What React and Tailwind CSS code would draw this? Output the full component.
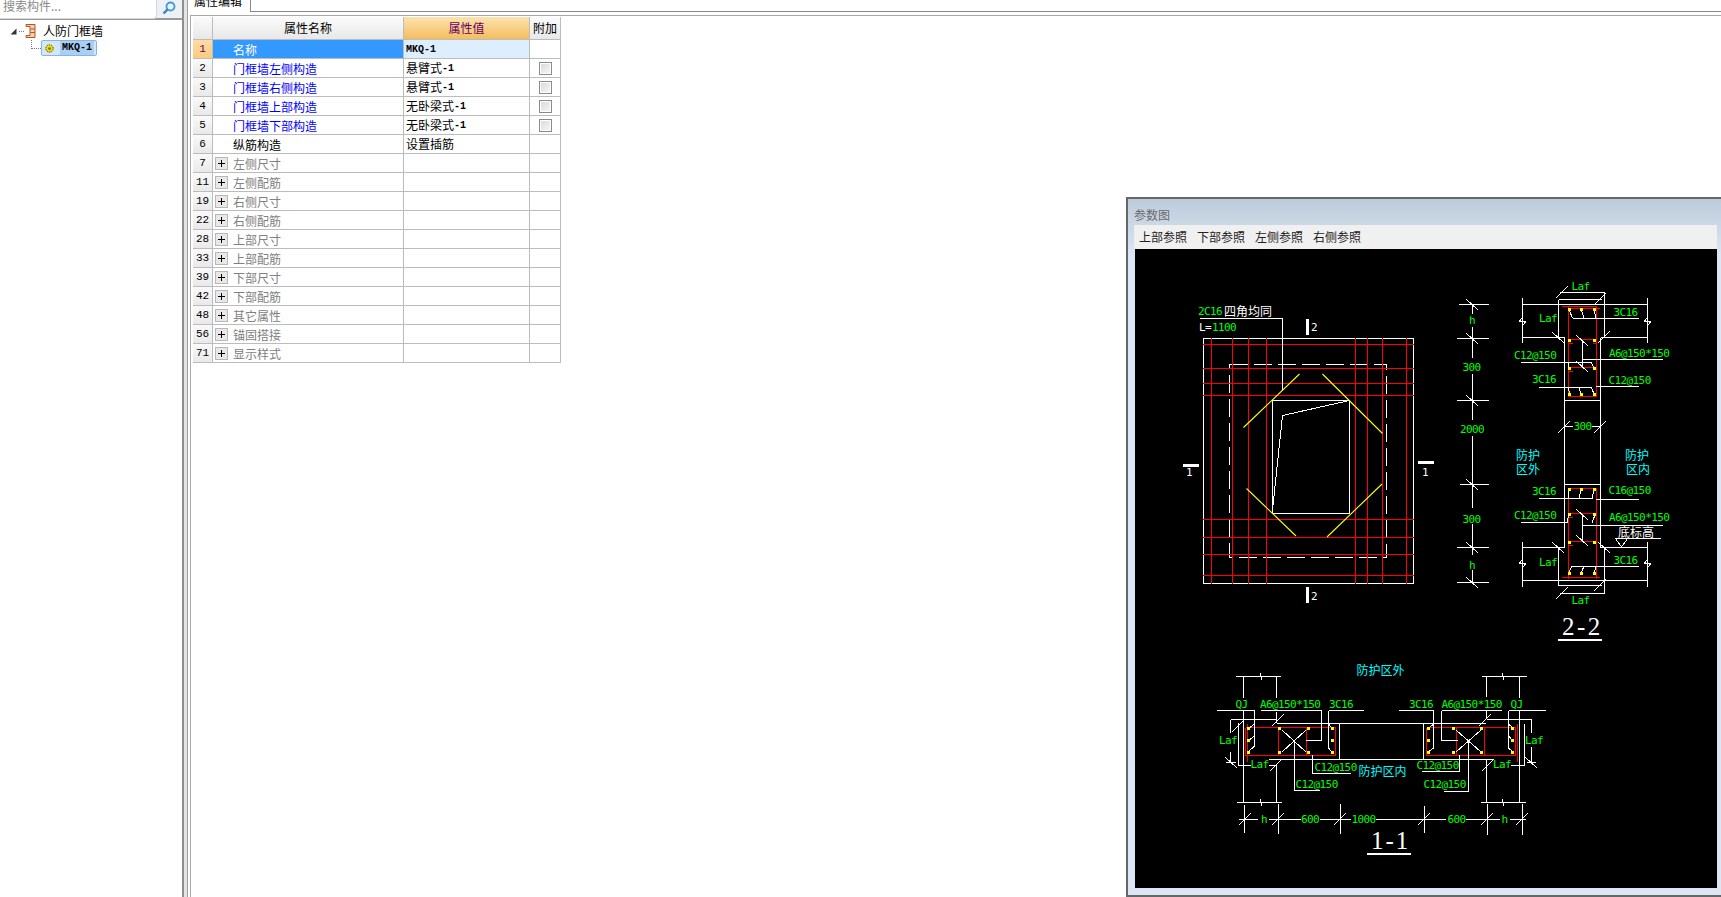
import React from 'react';

const rows = [
  { n: '1', name: '名称', value: <span className="font-['Liberation_Mono'] text-[10px] font-bold">MKQ-1</span>, active: true },
  { n: '2', name: '门框墙左侧构造', cn: '悬臂式', check: true, link: true },
  { n: '3', name: '门框墙右侧构造', cn: '悬臂式', check: true, link: true },
  { n: '4', name: '门框墙上部构造', cn: '无卧梁式', check: true, link: true },
  { n: '5', name: '门框墙下部构造', cn: '无卧梁式', check: true, link: true },
  { n: '6', name: '纵筋构造', value: '设置插筋' },
  { n: '7', name: '左侧尺寸', group: true },
  { n: '11', name: '左侧配筋', group: true },
  { n: '19', name: '右侧尺寸', group: true },
  { n: '22', name: '右侧配筋', group: true },
  { n: '28', name: '上部尺寸', group: true },
  { n: '33', name: '上部配筋', group: true },
  { n: '39', name: '下部尺寸', group: true },
  { n: '42', name: '下部配筋', group: true },
  { n: '48', name: '其它属性', group: true },
  { n: '56', name: '锚固搭接', group: true },
  { n: '71', name: '显示样式', group: true },
];

const back = (x, y) => [x - 6, y - 5, x + 6, y + 6];
const fwd = (x, y) => [x - 6, y + 6, x + 6, y - 6];

// drawing coordinates are page pixels, see the viewBox on the svg
const white = [
  // plan
  [1200, 318.5, 1282.5, 318.5], [1282.5, 318.5, 1282.5, 390],
  [1349.5, 400.5, 1282.5, 415.5], [1282.5, 415.5, 1272.5, 510],
  // 2-2 dimension column
  [1472.5, 304, 1472.5, 314], [1472.5, 327, 1472.5, 358], [1472.5, 374, 1472.5, 420], [1472.5, 436, 1472.5, 508],
  [1472.5, 524, 1472.5, 555], [1472.5, 570, 1472.5, 582],
  [1459, 304.5, 1489, 304.5], [1457, 338.5, 1489, 338.5], [1457, 400.5, 1489, 400.5],
  [1460, 484.5, 1489, 484.5], [1457, 547.5, 1489, 547.5], [1457, 582.5, 1489, 582.5],
  back(1472, 304), back(1472, 338), back(1472, 400), back(1472, 484), back(1472, 547), back(1472, 582),
  // 2-2 walls
  [1522.5, 304.5, 1647.5, 304.5], [1522.5, 298, 1522.5, 343], [1647.5, 298, 1647.5, 343],
  [1522.5, 337.5, 1564.5, 337.5], [1600.5, 337.5, 1647.5, 337.5],
  [1564.5, 337.5, 1564.5, 547.5], [1600.5, 337.5, 1600.5, 547.5],
  [1564.5, 400.5, 1600.5, 400.5], [1564.5, 484.5, 1600.5, 484.5],
  [1522.5, 547.5, 1564.5, 547.5], [1600.5, 547.5, 1647.5, 547.5],
  [1522.5, 580.5, 1647.5, 580.5], [1522.5, 542, 1522.5, 587], [1647.5, 542, 1647.5, 587],
  // break marks
  [1519, 321.5, 1526, 321.5], [1644, 321.5, 1651, 321.5], [1519, 563.5, 1526, 563.5], [1644, 563.5, 1651, 563.5],
  [1519, 321.5, 1523, 317], [1526, 321.5, 1522, 326], [1644, 321.5, 1648, 317], [1651, 321.5, 1647, 326],
  [1519, 563.5, 1523, 559], [1526, 563.5, 1522, 568], [1644, 563.5, 1648, 559], [1651, 563.5, 1647, 568],
  [1558.5, 299.5, 1558.5, 337.5], [1604.5, 292.5, 1604.5, 337.5],
  [1558.5, 299.5, 1601.5, 299.5], [1560, 292.5, 1604.5, 292.5],
  fwd(1562, 292), fwd(1600, 299), back(1558, 337), fwd(1604, 337),
  [1558.5, 547.5, 1558.5, 585.5], [1604.5, 547.5, 1604.5, 593.5],
  [1558.5, 585.5, 1601.5, 585.5], [1560, 593.5, 1604.5, 593.5],
  fwd(1562, 593), fwd(1600, 585), back(1558, 547), back(1604, 547),
  [1565, 426.5, 1573, 426.5], [1592, 426.5, 1600, 426.5], fwd(1564, 427), fwd(1600, 427),
  // 2-2 top stirrups
  [1572.5, 318.5, 1639, 318.5], [1569, 309, 1572.5, 318.5], [1581, 309, 1584, 318.5], [1594, 309, 1596, 318.5],
  back(1582, 340), [1582.5, 340, 1582.5, 367], [1582.5, 359.5, 1662.5, 359.5], [1521, 362.5, 1591.5, 362.5],
  [1568, 363, 1569, 368], [1591.5, 363, 1594, 368], back(1582, 366),
  [1539, 387.5, 1591.5, 387.5], [1568, 387.5, 1570, 394], [1579, 387.5, 1581, 394], [1591.5, 387.5, 1594, 394],
  [1596, 386.5, 1639, 386.5],
  // 2-2 bottom stirrups
  [1539, 498.5, 1593, 498.5], [1569, 489, 1568, 498.5], [1581, 489, 1579, 498.5], [1594, 489, 1592, 498.5],
  [1596, 499.5, 1639, 499.5], [1521, 522.5, 1568, 522.5], [1569, 514, 1567, 522.5], [1595, 515, 1592, 522.5],
  back(1582, 514), [1582.5, 515, 1582.5, 540], [1582.5, 525.5, 1662.5, 525.5], back(1582, 540),
  [1615, 538.5, 1661, 538.5], [1616, 539.5, 1621.5, 547], [1621.5, 547, 1627, 539.5],
  [1571.5, 566.5, 1639, 566.5], [1569, 573, 1571.5, 566.5], [1581, 573, 1584, 566.5], [1594, 573, 1596, 566.5],
  // 1-1 left half
  [1236, 676.5, 1281, 676.5], [1243.5, 676.5, 1243.5, 698], [1276.5, 676.5, 1276.5, 698],
  [1217, 710.5, 1254.5, 710.5], [1261, 710.5, 1321.5, 710.5], [1328.5, 710.5, 1364, 710.5],
  [1254.5, 710.5, 1254.5, 746], [1254.5, 724, 1248, 729], [1254.5, 736, 1248, 741], [1254.5, 746, 1248, 752],
  [1321.5, 710.5, 1321.5, 740.5], [1306, 740.5, 1321.5, 740.5],
  [1328.5, 710.5, 1328.5, 748], [1328.5, 748, 1332, 752], [1328.5, 724, 1332, 728],
  [1276.5, 712, 1276.5, 723], fwd(1278, 720),
  [1276.5, 723.5, 1423.5, 723.5], [1339.5, 723.5, 1339.5, 759.5], [1423.5, 723.5, 1423.5, 759.5],
  [1269, 759.5, 1493, 759.5],
  [1230.5, 719.5, 1276.5, 719.5], [1230.5, 719.5, 1230.5, 733],
  [1238.5, 723, 1238.5, 765.5], [1238.5, 765.5, 1250.5, 765.5], [1269, 765.5, 1277, 765.5], fwd(1276, 765),
  [1230.5, 752, 1230.5, 762.5], [1226, 762.5, 1236, 762.5], back(1231, 762), fwd(1238, 726),
  [1243.5, 710.5, 1243.5, 802.5], [1276.5, 765, 1276.5, 802.5], [1237, 802.5, 1281.5, 802.5],
  [1282, 730, 1306, 752], [1306, 730, 1282, 752],
  [1294.5, 741, 1294.5, 790.5], [1294.5, 790.5, 1320, 790.5],
  [1312.5, 755, 1312.5, 773.5], [1312.5, 773.5, 1350.5, 773.5],
  // 1-1 right half
  [1482, 676.5, 1526.5, 676.5], [1486.5, 676.5, 1486.5, 697], [1519.5, 676.5, 1519.5, 698],
  [1399, 710.5, 1434, 710.5], [1441.5, 710.5, 1501.5, 710.5], [1508.5, 710.5, 1545.5, 710.5],
  [1433.5, 710.5, 1433.5, 748], [1433.5, 748, 1428, 752], [1433.5, 724, 1428, 729],
  [1441.5, 710.5, 1441.5, 740.5], [1441.5, 740.5, 1457.5, 740.5],
  [1508.5, 710.5, 1508.5, 748], [1508.5, 748, 1513, 752], [1508.5, 724, 1513, 728], [1508.5, 736, 1513, 741],
  [1486.5, 710, 1486.5, 719], [1486.5, 759, 1486.5, 802.5], [1519.5, 710, 1519.5, 802.5],
  [1487, 719.5, 1531.5, 719.5], [1531.5, 719.5, 1531.5, 733], fwd(1485, 720),
  [1423, 723.5, 1486, 723.5],
  [1456, 730, 1481, 752], [1481, 730, 1456, 752],
  [1468.5, 741, 1468.5, 791.5], [1443.5, 791.5, 1468.5, 791.5],
  [1459.5, 755, 1459.5, 771.5], [1421.5, 771.5, 1459.5, 771.5],
  [1511, 765.5, 1524.5, 765.5], [1524.5, 724, 1524.5, 765.5], fwd(1488, 765),
  [1531.5, 747, 1531.5, 762.5], [1527, 762.5, 1536, 762.5], back(1531, 762),
  [1481, 802.5, 1526, 802.5],
  // 1-1 bottom dimension
  [1239, 819.5, 1258, 819.5], [1269, 819.5, 1301, 819.5], [1320, 819.5, 1351, 819.5], [1376, 819.5, 1446, 819.5],
  [1466, 819.5, 1500, 819.5], [1510, 819.5, 1526, 819.5],
  [1244.5, 805, 1244.5, 832.5], [1278.5, 804, 1278.5, 834], [1340.5, 804, 1340.5, 834],
  [1424.5, 806, 1424.5, 832.5], [1487.5, 804, 1487.5, 835], [1522.5, 804, 1522.5, 835],
  fwd(1245, 819), fwd(1278, 819), fwd(1340, 819), fwd(1424, 819), fwd(1487, 819), fwd(1522, 819),
  // little arrows on the 1-1 top and bottom dimensions
  [1260, 673, 1262, 680], [1260, 799, 1262, 806], [1502, 673, 1504, 680], [1502, 799, 1504, 806],
];

const red = [
  [1211.5, 338, 1211.5, 584], [1232.5, 338, 1232.5, 584], [1248.5, 338, 1248.5, 584], [1266.5, 338, 1266.5, 584],
  [1355.5, 338, 1355.5, 584], [1367.5, 338, 1367.5, 584], [1382.5, 338, 1382.5, 584], [1406.5, 338, 1406.5, 584],
  [1203, 344.5, 1414, 344.5], [1203, 368.5, 1414, 368.5], [1203, 383.5, 1414, 383.5], [1203, 395.5, 1414, 395.5],
  [1203, 519.5, 1414, 519.5], [1203, 537.5, 1414, 537.5], [1203, 554.5, 1414, 554.5], [1203, 575.5, 1414, 575.5],
  // 2-2
  [1568.5, 306.5, 1568.5, 396.5], [1596.5, 306.5, 1596.5, 396.5], [1568.5, 396.5, 1596.5, 396.5],
  [1562, 306.5, 1597, 306.5], [1568.5, 308.5, 1600, 308.5], [1568.5, 339.5, 1596.5, 339.5], [1568.5, 367.5, 1596.5, 367.5],
  [1569, 343.5, 1573, 343.5], [1569, 371.5, 1573, 371.5], [1593, 343.5, 1597, 343.5],
  [1568.5, 488.5, 1568.5, 578.5], [1596.5, 488.5, 1596.5, 578.5], [1568.5, 488.5, 1596.5, 488.5],
  [1562, 577.5, 1600, 577.5], [1568.5, 513.5, 1596.5, 513.5], [1568.5, 541.5, 1596.5, 541.5],
  [1569, 517.5, 1573, 517.5], [1569, 545.5, 1573, 545.5],
  // 1-1
  [1245.5, 727.5, 1335.5, 727.5], [1245.5, 755.5, 1335.5, 755.5], [1245.5, 727.5, 1245.5, 755.5], [1335.5, 727.5, 1335.5, 755.5],
  [1247.5, 724, 1247.5, 761.5], [1278.5, 727.5, 1278.5, 755.5], [1306.5, 727.5, 1306.5, 755.5],
  [1426.5, 727.5, 1515.5, 727.5], [1426.5, 755.5, 1515.5, 755.5], [1426.5, 727.5, 1426.5, 755.5], [1515.5, 727.5, 1515.5, 755.5],
  [1517.5, 724, 1517.5, 761.5], [1456.5, 727.5, 1456.5, 755.5], [1484.5, 727.5, 1484.5, 755.5],
];

const yellow = [
  [1299.5, 374, 1243.5, 427.5], [1322.5, 374, 1382.5, 433.5], [1246.5, 488.5, 1296, 536], [1327, 537, 1382, 484],
];

const dots = [
  [1569, 309], [1581, 309], [1594, 309], [1569, 340], [1594, 340], [1569, 368], [1594, 368], [1569, 394], [1581, 394], [1594, 394],
  [1569, 489], [1581, 489], [1594, 489], [1569, 514], [1594, 514], [1569, 542], [1594, 542], [1569, 573], [1581, 573], [1594, 573],
  [1248, 728], [1248, 740], [1248, 752], [1279, 728], [1279, 752], [1308, 728], [1308, 752], [1332, 728], [1332, 740], [1332, 752],
  [1428, 728], [1428, 740], [1428, 752], [1453, 728], [1453, 752], [1481, 728], [1481, 752], [1512, 728], [1512, 740], [1512, 752],
];

// x, baseline, text, anchor
const green = [
  [1198, 315, '2C16'], [1212, 331, '1100'],
  [1580.5, 290, 'Laf', 'middle'], [1539, 322, 'Laf'], [1613.5, 316, '3C16'], [1514, 358.5, 'C12@150'],
  [1609, 356.5, 'A6@150*150'], [1532, 382.5, '3C16'], [1608.5, 383.5, 'C12@150'], [1582.5, 430, '300', 'middle'],
  [1472, 324, 'h', 'middle'], [1471.5, 371, '300', 'middle'], [1472, 433, '2000', 'middle'],
  [1532, 494.5, '3C16'], [1608.5, 493.5, 'C16@150'], [1514, 518.5, 'C12@150'], [1609, 520.5, 'A6@150*150'],
  [1471.5, 523, '300', 'middle'], [1472, 569, 'h', 'middle'], [1539, 565.5, 'Laf'], [1613.5, 564, '3C16'],
  [1580.5, 603.5, 'Laf', 'middle'],
  [1235.5, 708, 'QJ'], [1260, 708, 'A6@150*150'], [1329, 708, '3C16'], [1219, 743.5, 'Laf'], [1250.5, 767.5, 'Laf'],
  [1295.5, 787.5, 'C12@150'], [1314.5, 770.5, 'C12@150'],
  [1409, 708, '3C16'], [1441.5, 708, 'A6@150*150'], [1510.5, 708, 'QJ'], [1493, 767.5, 'Laf'], [1525, 743.5, 'Laf'],
  [1423.5, 787.5, 'C12@150'], [1416.5, 768.5, 'C12@150'],
  [1264, 823, 'h', 'middle'], [1310, 823, '600', 'middle'], [1363.5, 823, '1000', 'middle'], [1456.5, 823, '600', 'middle'], [1504.5, 823, 'h', 'middle'],
];

const cyan = [
  [1516, 460, '防护'], [1516, 474, '区外'], [1625, 460, '防护'], [1626, 474, '区内'],
  [1356.5, 675, '防护区外'], [1358.5, 776, '防护区内'],
];

const toPath = (segs) => segs.map(([a, b, c, d]) => `M${a} ${b}L${c} ${d}`).join('');

function Drawing() {
  return (
    <svg viewBox="1135 249 582 639" shapeRendering="crispEdges" className="block w-[582px] h-[639px] bg-black">
      <rect x="1203.5" y="338.5" width="210" height="245" fill="none" stroke="#fff" />
      <rect x="1272.5" y="400.5" width="77" height="113" fill="none" stroke="#fff" />
      <rect x="1229.5" y="364.5" width="157" height="193" fill="none" stroke="#fff" strokeDasharray="18 6" />
      <path d={toPath(red)} stroke="#ff0000" fill="none" />
      <path d={toPath(yellow)} stroke="#ffff00" strokeWidth="1.1" shapeRendering="auto" fill="none" />
      <path d={toPath(white)} stroke="#fff" fill="none" />
      {dots.map(([x, y]) => (
        <rect key={`${x}-${y}`} x={x - 1} y={y - 1} width="3" height="3" fill="#ffff00" />
      ))}
      {/* section marks */}
      <rect x="1306" y="319" width="3" height="16" fill="#fff" />
      <rect x="1306" y="587" width="3" height="16" fill="#fff" />
      <rect x="1183" y="464" width="16" height="3" fill="#fff" />
      <rect x="1418" y="461" width="16" height="3" fill="#fff" />
      <rect x="1558" y="639" width="44" height="2" fill="#fff" />
      <rect x="1367" y="853" width="44" height="2" fill="#fff" />
      {green.map(([x, y, t, anchor]) => (
        <text key={`${x}-${y}`} x={x} y={y} textAnchor={anchor} className="font-['DejaVu_Sans_Mono'] text-[11px] tracking-[-0.6px] fill-[#00ff00]">{t}</text>
      ))}
      {cyan.map(([x, y, t]) => (
        <text key={`${x}-${y}`} x={x} y={y} className="font-['Noto_Sans_CJK_SC'] text-[12px] fill-[#00ffff]">{t}</text>
      ))}
      <g className="font-['DejaVu_Sans_Mono'] text-[11px] tracking-[-0.6px] fill-white">
        <text x="1199" y="331">L=</text>
        <text x="1311" y="331">2</text>
        <text x="1311" y="600">2</text>
        <text x="1186" y="476">1</text>
        <text x="1422" y="476">1</text>
      </g>
      <text x="1224" y="316" className="font-['Noto_Sans_CJK_SC'] text-[12px] fill-white">四角均同</text>
      <text x="1618" y="537" className="font-['Noto_Sans_CJK_SC'] text-[12px] fill-white">底标高</text>
      <text x="1562" y="635" className="font-['Liberation_Serif'] text-[25px] tracking-[2.5px] fill-white">2-2</text>
      <text x="1371" y="849" className="font-['Liberation_Serif'] text-[25px] tracking-[2px] fill-white">1-1</text>
    </svg>
  );
}

function Checkbox() {
  return <div className="w-[13px] h-[13px] border border-[#8a8a8a] bg-gradient-to-br from-[#d8d8d8] to-[#f8f8f8] shadow-[inset_0_0_0_1px_#fff]" />;
}

function Plus() {
  return (
    <div className="relative w-[13px] h-[13px] mr-[5px] border border-[#b8b8b8] bg-[#e8e8e8]">
      <div className="absolute left-[2px] top-[5px] w-[7px] h-[1px] bg-black" />
      <div className="absolute left-[5px] top-[2px] w-[1px] h-[7px] bg-black" />
    </div>
  );
}

function Row({ row }) {
  const line = 'border-r border-b border-[#bcbcbc]';
  return (
    <>
      <div className={`${line} flex items-center justify-center font-['Liberation_Mono'] text-[11px] ${row.active ? 'bg-gradient-to-b from-[#fddca6] to-[#fbcb80] text-[#660066]' : 'bg-gradient-to-b from-[#fafafa] to-[#e9e9e9] text-black'}`}>{row.n}</div>
      <div className={`${line} flex items-center pt-[1px] ${row.group ? 'pl-[2px]' : 'pl-[20px]'} ${row.active ? 'bg-[#3399ff] text-white' : row.link ? 'text-[#0000ff]' : row.group ? 'text-[#808080]' : 'text-black'}`}>
        {row.group && <Plus />}
        {row.name}
      </div>
      <div className={`${line} flex items-center pl-[2px] ${row.active ? 'bg-[#ddeeff]' : ''}`}>
        {row.value}
        {row.cn && <>{row.cn}<span className="font-['Liberation_Mono'] text-[10px] font-bold">-1</span></>}
      </div>
      <div className={`${line} flex items-center justify-center`}>{row.check && <Checkbox />}</div>
    </>
  );
}

function PropertyTable() {
  const head = 'border-r border-b border-[#bcbcbc] flex items-center justify-center';
  return (
    <div className="grid grid-cols-[20px_191px_126px_31px] grid-rows-[23px_repeat(17,19px)] w-[368px]">
      <div className={`${head} bg-gradient-to-b from-[#fbfbfb] to-[#e8e8e8]`} />
      <div className={`${head} bg-gradient-to-b from-[#fbfbfb] to-[#e8e8e8]`}>属性名称</div>
      <div className={`${head} bg-gradient-to-b from-[#fde2ae] to-[#f3bd5c] text-[#660066]`}>属性值</div>
      <div className={`${head} bg-gradient-to-b from-[#fbfbfb] to-[#e8e8e8]`}>附加</div>
      {rows.map((row) => <Row key={row.n} row={row} />)}
    </div>
  );
}

function ParamWindow() {
  return (
    <div className="absolute left-[1126px] top-[197px] w-[595px] h-[700px] flex flex-col border-l-2 border-t-2 border-b-2 border-[#666666] pl-[6px] pr-[4px] bg-gradient-to-b from-[#bccbda] from-0% to-[#dce6f4] to-[8%]">
      <div className="h-[26px] flex items-center pt-[6px] text-[#6a6a6a]">参数图</div>
      <div className="h-[24px] flex items-center gap-[10px] pl-[5px] bg-[#f0f0f0] text-[#222222]">
        <span>上部参照</span>
        <span>下部参照</span>
        <span>左侧参照</span>
        <span>右侧参照</span>
      </div>
      <div className="pl-[1px]">
        <Drawing />
      </div>
    </div>
  );
}

function TreePanel() {
  return (
    <div className="w-[182px] shrink-0 flex flex-col bg-white">
      <div className="h-[20px] shrink-0 flex bg-[#edf1f6] border-b-2 border-[#9a9a9a]">
        <div className="w-[157px] h-[19px] bg-white border-r border-b border-[#d4d8de] rounded-br-[4px] pl-[3px] text-[#8a8a8a] leading-[12px]">搜索构件...</div>
        <svg viewBox="0 0 14 14" className="w-[14px] h-[14px] ml-[5px] mt-[1px]">
          <circle cx="8.5" cy="5.5" r="4" fill="#e6f3fc" stroke="#3f97d6" strokeWidth="1.8" />
          <path d="M5.5 8.5L1.5 12.5" stroke="#2f86c8" strokeWidth="2.4" />
        </svg>
      </div>
      <div className="flex items-center h-[18px] mt-[2px]">
        <svg viewBox="0 0 7 7" className="w-[7px] h-[7px] ml-[10px]"><path d="M6.5 0.5V6.5H0.5Z" fill="#333" /></svg>
        <div className="w-[5px] ml-[2px] mr-[1px] border-t border-dotted border-[#777]" />
        <svg viewBox="0 0 11 14" className="w-[11px] h-[14px] mr-[7px]">
          <path d="M1 .5H10V13.5H1V11.5H5V2.5H1Z" fill="#f4d0b0" stroke="#b3561e" />
          <path d="M5.5 5H10M5.5 8.5H10" stroke="#b3561e" />
        </svg>
        人防门框墙
      </div>
      <div className="flex items-center h-[16px] ml-[31px]">
        <div className="w-[10px] h-[9px] mb-[7px] border-l border-b border-dotted border-[#777]" />
        <div className="flex items-center w-[56px] h-[16px] bg-[#d3e6fa] border border-[#85b4e6] rounded-[2px]">
          <svg viewBox="0 0 12 12" className="w-[11px] h-[11px] ml-[2px]">
            <circle cx="6" cy="6" r="4" fill="#f4e000" stroke="#333" strokeWidth="1" strokeDasharray="1.5 1" />
            <circle cx="6" cy="6" r="1.5" fill="#7a6a00" />
          </svg>
          <span className="ml-[5px] px-[2px] bg-[#a9cff5] font-['Liberation_Mono'] text-[10px] font-bold leading-[14px] text-black">MKQ-1</span>
        </div>
      </div>
    </div>
  );
}

export default function App() {
  return (
    <div className="relative w-[1721px] h-[897px] overflow-hidden flex bg-white text-[12px] text-black font-['Noto_Sans_CJK_SC',sans-serif]">
      <TreePanel />
      <div className="w-[2px] shrink-0 bg-[#8f8f8f]" />
      <div className="w-[3px] shrink-0 bg-[#e4e4e4]" />
      <div className="w-[3px] shrink-0 border-l border-[#a0a0a0] bg-white" />
      <div className="flex-1 flex flex-col min-w-0">
        <div className="h-[12px] shrink-0 flex">
          <div className="w-[61px] overflow-hidden border-r border-[#8a8a8a] pl-[4px]">
            <div className="-mt-[6px] leading-[14px]">属性编辑</div>
          </div>
          <div className="flex-1 border-b border-[#8a8a8a]" />
        </div>
        <div className="flex-1 mt-[3px] border-l border-t border-[#a8a8a8] pl-[2px] pt-[1px]">
          <PropertyTable />
        </div>
      </div>
      <ParamWindow />
    </div>
  );
}
